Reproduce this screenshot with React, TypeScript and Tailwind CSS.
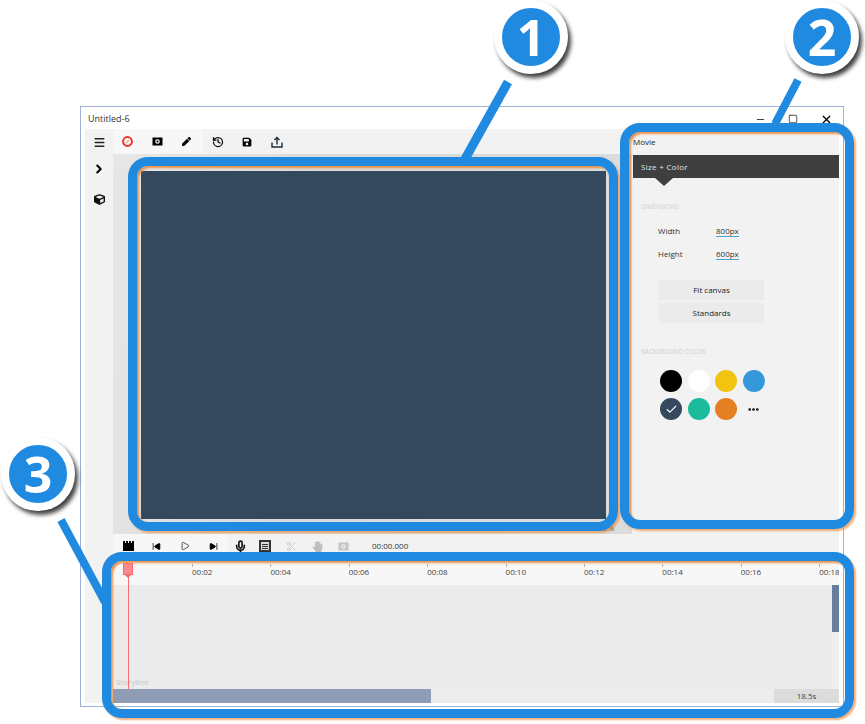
import React from "react";
import { Menu, ChevronRight, History, Mic, Scissors, SkipBack, SkipForward, Play, Check, X, Square, Minus, MoreHorizontal } from "lucide-react";
import { FaCube, FaPen, FaSave, FaHandPaper } from "react-icons/fa";

const font = { fontFamily: '"Open Sans", "Noto Sans", sans-serif' };

function Clapper() {
  return (
    <svg width="11" height="10" viewBox="0 0 11 10" fill="#000">
      <path d="M0 0h2v2h1V0h2v2h1V0h2v2h1V0h2v10H0z" />
    </svg>
  );
}

function Record() {
  return (
    <svg width="11" height="11" viewBox="0 0 11 11" fill="none">
      <circle cx="5.5" cy="5.5" r="4.4" stroke="#f0302c" strokeWidth="2" />
      <path d="M3.8 7.2 7 4" stroke="#f3a09c" strokeWidth="1.2" />
    </svg>
  );
}

function BoxCamera({ color }: { color: string }) {
  return (
    <svg width="11" height="9" viewBox="0 0 11 9">
      <path fillRule="evenodd" fill={color} d="M0.5 0.5h10v8h-10zM5.5 2.2a2.3 2.3 0 1 0 0 4.6a2.3 2.3 0 1 0 0-4.6z" />
      <circle cx="5.5" cy="4.5" r="1.1" fill={color} />
    </svg>
  );
}

function Share() {
  return (
    <svg width="12" height="12" viewBox="0 0 12 12" fill="none" stroke="#1c2b3a" strokeWidth="1.4">
      <path d="M1 6.5v4.5h10V6.5" />
      <path d="M6 8.5V1.5" />
      <path d="M3.5 4 6 1.5 8.5 4" />
    </svg>
  );
}

function ToolButton({ children }: { children: React.ReactNode }) {
  return <div className="flex h-full w-[29.5px] items-center justify-center">{children}</div>;
}

function Toolbar() {
  return (
    <div className="flex h-[25px] bg-[#f2f2f2]">
      <div className="flex w-[90px] bg-[#f7f7f7]">
        <ToolButton>
          <Record />
        </ToolButton>
        <ToolButton>
          <BoxCamera color="#000" />
        </ToolButton>
        <ToolButton>
          <FaPen size={9} color="#000" />
        </ToolButton>
      </div>
      <ToolButton>
        <History size={12} strokeWidth={2.5} color="#000" />
      </ToolButton>
      <ToolButton>
        <FaSave size={10} color="#000" />
      </ToolButton>
      <ToolButton>
        <Share />
      </ToolButton>
    </div>
  );
}

function Panel() {
  const colors = ["#000000", "#ffffff", "#f1c40f", "#3498db", "#34495e", "#1abc9c", "#e67e22"];
  return (
    <div className="flex h-full w-[207px] flex-col bg-[#f2f2f2] pl-px" style={font}>
      <div className="flex h-[26px] items-center text-[8px] text-[#222]">Movie</div>
      <div className="flex h-[23px] items-center bg-[#3f3f3f] pl-[8px] text-[8px] tracking-[0.3px] text-[#e4e4e4]">Size + Color</div>
      <div className="ml-[22px] h-0 w-0 border-x-[9px] border-t-[8px] border-x-transparent border-t-[#3f3f3f]" />
      <div className="ml-[8px] mt-[16px] text-[6.2px] leading-[9px] text-[#cfcfcf]">DIMENSIONS</div>
      <div className="ml-[25px] mt-[13px] flex h-[14px] items-center gap-[36px] text-[8px] text-[#333]">
        <span className="w-[22px]">Width</span>
        <span className="border-b border-[#4fa0d0] leading-[11px]">800px</span>
      </div>
      <div className="ml-[25px] mt-[9px] flex h-[14px] items-center gap-[36px] text-[8px] text-[#333]">
        <span className="w-[22px]">Height</span>
        <span className="border-b border-[#4fa0d0] leading-[11px]">600px</span>
      </div>
      <div className="ml-[26px] mt-[19px] flex h-[20px] w-[105px] items-center justify-center bg-[#ebebeb] text-[8px] text-[#222]">Fit canvas</div>
      <div className="ml-[26px] mt-[3px] flex h-[20px] w-[105px] items-center justify-center bg-[#ebebeb] text-[8px] text-[#222]">Standards</div>
      <div className="ml-[8px] mt-[24px] text-[6.2px] leading-[9px] text-[#cfcfcf]">BACKGROUND COLOR</div>
      <div className="ml-[27px] mt-[14px] grid grid-cols-[repeat(4,22px)] gap-x-[5.5px] gap-y-[6px]">
        {colors.map((c, i) => (
          <div key={c} className="flex h-[22px] w-[22px] items-center justify-center rounded-full" style={{ backgroundColor: c }}>
            {i === 4 && <Check size={13} color="#fff" strokeWidth={2} />}
          </div>
        ))}
        <div className="flex h-[22px] w-[22px] items-center justify-center">
          <MoreHorizontal size={13} color="#000" strokeWidth={3} />
        </div>
      </div>
    </div>
  );
}

function Controls() {
  const cell = "flex w-[29px] h-full items-center justify-center";
  return (
    <div className="flex h-[24px] bg-[#f2f2f2]" style={font}>
      <div className="flex w-[115px] bg-[#f7f7f7] pl-[1px]">
        <div className={cell}><Clapper /></div>
        <div className={cell}><SkipBack size={9} color="#000" fill="#000" /></div>
        <div className={cell}><Play size={10} color="#333" /></div>
        <div className={cell}><SkipForward size={9} color="#000" fill="#000" /></div>
      </div>
      <div className="flex h-full w-[24px] items-center justify-center"><Mic size={13} color="#111" strokeWidth={3} /></div>
      <div className="flex h-full w-[26px] items-center justify-center">
        <div className="flex h-[12px] w-[12px] flex-col items-center justify-center gap-px border-2 border-[#333] bg-[#ddd]">
          <div className="h-px w-[6px] bg-[#333]" />
          <div className="h-px w-[6px] bg-[#333]" />
          <div className="h-px w-[6px] bg-[#333]" />
        </div>
      </div>
      <div className="flex h-full w-[26px] items-center justify-center"><Scissors size={11} color="#c8c8c8" /></div>
      <div className="flex h-full w-[26px] items-center justify-center"><FaHandPaper size={11} color="#bdbdbd" /></div>
      <div className="flex h-full w-[26px] items-center justify-center"><BoxCamera color="#c4c4c4" /></div>
      <div className="ml-[16px] flex h-full items-center text-[8px] text-[#333]">00:00.000</div>
    </div>
  );
}

function Timeline() {
  const labels = ["00:02", "00:04", "00:06", "00:08", "00:10", "00:12", "00:14", "00:16", "00:18"];
  return (
    <div className="relative flex min-h-0 flex-1 flex-col" style={font}>
      <div className="flex h-[27px] overflow-hidden bg-[#f7f7f7] pl-[79px] pt-[6px]">
        {labels.map((l) => (
          <div key={l} className="w-[78.4px] shrink-0">
            <div className="h-[3px] w-px bg-[#b0b0b0]" />
            <div className="text-[8px] leading-[10px] text-[#444]">{l}</div>
          </div>
        ))}
      </div>
      <div className="relative flex min-h-0 flex-1 justify-end bg-[#ebebeb]">
        <div className="w-[7px] bg-[#efefef]">
          <div className="h-[47px] bg-[#667d9f]" />
        </div>
        <div className="absolute bottom-[3px] left-[3px] text-[8px] leading-[8px] text-[#c8c8c8]">Storyline</div>
      </div>
      <div className="flex h-[14px] items-stretch justify-between bg-[#ededed]">
        <div className="w-[318px] bg-[#8e9db5]" />
        <div className="flex w-[65px] items-center justify-center bg-[#dcdcdc] text-[8px] text-[#444]">18.5s</div>
      </div>
      <div className="absolute left-[11px] top-[6px] flex flex-col items-center">
        <div className="h-[10px] w-[8px] bg-[#fb8a8e] outline outline-1 outline-[#f9696e]" />
        <div className="h-0 w-0 border-x-[4px] border-t-[4px] border-x-transparent border-t-[#f9696e]" />
      </div>
      <div className="absolute bottom-[14px] left-[14.5px] top-[16px] w-px bg-[#fb6f74]" />
    </div>
  );
}

function Frame({ cls }: { cls: string }) {
  return <div className={`pointer-events-none absolute rounded-[20px] border-[9px] border-[#1f8ae0] shadow-[2px_2px_2px_rgba(240,140,60,0.7),inset_2px_2px_2px_rgba(235,135,55,0.9)] ${cls}`} />;
}

function Bubble({ n, cls }: { n: string; cls: string }) {
  return (
    <div className={`absolute flex h-[74px] w-[74px] items-center justify-center rounded-full border-[8px] border-white bg-[#1f8ae0] text-[50px] font-bold leading-none text-white shadow-[3px_4px_4px_rgba(0,0,0,0.75)] ${cls}`} style={font}>
      {n}
    </div>
  );
}

export default function App() {
  return (
    <div className="relative h-[724px] w-[865px] overflow-hidden bg-white">
      <div className="pl-[80px] pt-[106px]">
        <div className="flex h-[601px] w-[764px] flex-col border border-[#9db2d6] bg-white">
          <div className="flex h-[22px] shrink-0 items-center justify-between pl-[7px] pr-[10px] pt-[2px]" style={font}>
            <span className="text-[9px] text-[#333]">Untitled-6</span>
            <div className="flex items-center gap-[22px]">
              <Minus size={11} color="#333" />
              <Square size={10} color="#333" />
              <X size={13} color="#000" strokeWidth={2.5} />
            </div>
          </div>
          <div className="flex min-h-0 flex-1 pb-[3px] pl-[4px] pr-[4px]">
            <div className="flex w-[28px] shrink-0 flex-col items-center bg-[#f2f2f2] pt-[7px]">
              <Menu size={13} color="#222" strokeWidth={2.5} />
              <ChevronRight size={14} color="#000" strokeWidth={3.5} className="mt-[13px]" />
              <FaCube size={11} color="#111" className="mt-[18px]" />
            </div>
            <div className="flex min-w-0 flex-1 flex-col bg-[#f2f2f2]">
              <div className="flex h-[405px] shrink-0">
                <div className="flex w-[519px] shrink-0 flex-col">
                  <Toolbar />
                  <div className="relative flex-1 bg-[linear-gradient(100deg,#e6e7e6,#d8dad9_40%,#dcdcdc)] pl-[28px] pt-[17px]">
                    <div className="h-[348px] w-[465px] bg-[#34495e]" />
                    <div className="absolute bottom-[1px] right-[18px] text-[8px] leading-[10px] text-[#444]" style={font}>100%</div>
                  </div>
                </div>
                <Panel />
              </div>
              <Controls />
              <Timeline />
            </div>
          </div>
        </div>
      </div>

      <Frame cls="left-[128px] top-[157px] h-[374px] w-[490px]" />
      <Frame cls="left-[620px] top-[123px] h-[406px] w-[234px]" />
      <Frame cls="left-[102px] top-[552px] h-[166px] w-[752px]" />

      <svg className="pointer-events-none absolute left-0 top-0" width="865" height="724">
        <line x1="508" y1="82" x2="465" y2="159" stroke="#1f8ae0" strokeWidth="9" />
        <line x1="798" y1="80" x2="775" y2="124" stroke="#1f8ae0" strokeWidth="8" />
        <line x1="61" y1="520" x2="105" y2="602" stroke="#1f8ae0" strokeWidth="8" />
      </svg>

      <Bubble n="1" cls="left-[494px] top-0" />
      <Bubble n="2" cls="left-[785px] top-0" />
      <Bubble n="3" cls="left-[1px] top-[437px]" />
    </div>
  );
}
